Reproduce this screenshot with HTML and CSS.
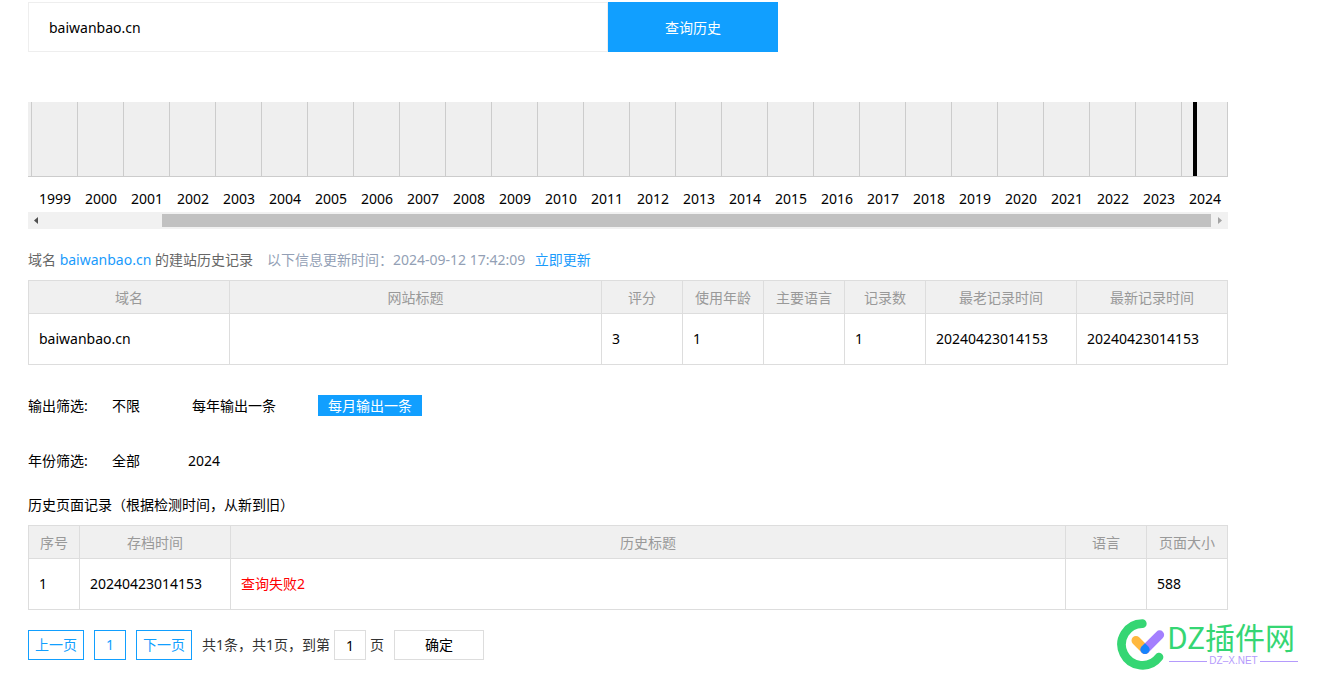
FILE: index.html
```html
<!DOCTYPE html>
<html lang="zh-CN">
<head>
<meta charset="utf-8">
<title>建站历史查询</title>
<link rel="stylesheet" href="styles.css">
</head>
<body>
<main class="page">
  <form class="search">
    <input class="search-input" type="text" value="baiwanbao.cn" aria-label="域名">
    <button class="search-button" type="button">查询历史</button>
  </form>

  <section class="timeline">
    <div class="years">
      <div class="year"></div><div class="year">1999</div><div class="year">2000</div><div class="year">2001</div><div class="year">2002</div><div class="year">2003</div><div class="year">2004</div><div class="year">2005</div><div class="year">2006</div><div class="year">2007</div><div class="year">2008</div><div class="year">2009</div><div class="year">2010</div><div class="year">2011</div><div class="year">2012</div><div class="year">2013</div><div class="year">2014</div><div class="year">2015</div><div class="year">2016</div><div class="year">2017</div><div class="year">2018</div><div class="year">2019</div><div class="year">2020</div><div class="year">2021</div><div class="year">2022</div><div class="year">2023</div><div class="year has-record">2024</div>
    </div>
    <div class="scrollbar">
      <svg class="arrow" viewBox="0 0 17 17"><path d="M10 5v7L6 8.500z" fill="#505050"/></svg>
      <div class="track"><div class="thumb"></div></div>
      <svg class="arrow" viewBox="0 0 17 17"><path d="M7 5v7l4-3.500z" fill="#a3a3a3"/></svg>
    </div>
  </section>

  <p class="info">域名 <a class="link" href="#">baiwanbao.cn</a> 的建站历史记录<span class="updated">以下信息更新时间：2024-09-12 17:42:09 <a class="link refresh" href="#">立即更新</a></span></p>

  <table class="grid">
    <colgroup><col class="w-domain"><col><col class="w-small"><col class="w-small"><col class="w-small"><col class="w-small"><col class="w-time"><col class="w-time"></colgroup>
    <thead><tr><th>域名</th><th>网站标题</th><th>评分</th><th>使用年龄</th><th>主要语言</th><th>记录数</th><th>最老记录时间</th><th>最新记录时间</th></tr></thead>
    <tbody><tr><td>baiwanbao.cn</td><td></td><td>3</td><td>1</td><td></td><td>1</td><td>20240423014153</td><td>20240423014153</td></tr></tbody>
  </table>

  <div class="filter">
    <span class="filter-label">输出筛选:</span>
    <div class="options">
      <a class="option" href="#">不限</a>
      <a class="option" href="#">每年输出一条</a>
      <a class="option active" href="#">每月输出一条</a>
    </div>
  </div>
  <div class="filter">
    <span class="filter-label">年份筛选:</span>
    <div class="options options-year">
      <a class="option" href="#">全部</a>
      <a class="option" href="#">2024</a>
    </div>
  </div>

  <h2 class="heading">历史页面记录（根据检测时间，从新到旧）</h2>
  <table class="grid">
    <colgroup><col class="w-index"><col class="w-time"><col><col class="w-small"><col class="w-small"></colgroup>
    <thead><tr><th>序号</th><th>存档时间</th><th>历史标题</th><th>语言</th><th>页面大小</th></tr></thead>
    <tbody><tr><td>1</td><td>20240423014153</td><td><a class="failed" href="#">查询失败2</a></td><td></td><td>588</td></tr></tbody>
  </table>
</main>

<footer class="footer">
  <nav class="pager">
    <a class="page-link" href="#">上一页</a>
    <a class="page-link page-number" href="#">1</a>
    <a class="page-link" href="#">下一页</a>
    <label class="jump">共1条，共1页，到第<input class="jump-input" type="text" value="1">页</label>
    <button class="confirm" type="button">确定</button>
  </nav>
  <div class="brand">
    <svg class="brand-mark" viewBox="20 26 150 152" fill="none" stroke-linecap="round">
      <path d="M96 39.500A62.500 62.500 0 1 0 146 140" stroke="#35d673" stroke-width="26"/>
      <path d="M77 90l27 27" stroke="#ffb83e" stroke-width="27"/>
      <path d="M148 73l-44 44" stroke="#a37ffe" stroke-width="27"/>
      <path d="M104 98l10 10q8 9 0 18-10 9-20 0-8-9 0-18z" fill="#1684fc"/>
    </svg>
    <div class="brand-text">
      <div class="brand-name">DZ插件网</div>
      <div class="brand-site">DZ–X.NET</div>
    </div>
  </div>
</footer>
</body>
</html>
```
FILE: styles.css
```css
*,
*::before,
*::after {
  box-sizing: border-box;
}

body,
input,
button {
  font-family: "Noto Sans", "Noto Sans CJK SC", sans-serif;
  font-size: 14px;
  line-height: 20px;
  color: #000;
}

body {
  margin: 0;
  background: #fff;
}

a {
  text-decoration: none;
}

.page {
  max-width: 1256px;
  padding: 2px 28px 0;
}

.search {
  display: flex;
  max-width: 750px;
  height: 50px;
}

.search-input {
  flex: 1;
  min-width: 0;
  padding: 2px 20px 0;
  border: 1px solid #eee;
  outline: none;
}

.search-button {
  width: 170px;
  padding: 2px 0 0;
  border: 0;
  background: #119fff;
  color: #fff;
}

.timeline {
  margin-top: 50px;
}

.years {
  display: flex;
  justify-content: flex-end;
  overflow: hidden;
}

.year {
  flex: 0 0 46px;
  height: 110px;
  text-align: center;
}

.year::before {
  content: "";
  display: block;
  height: 75px;
  margin-bottom: 12px;
  border: solid #ccc;
  border-width: 0 1px 1px 0;
  background: #efefef;
}

.has-record::before {
  background: linear-gradient(#000, #000) 11px 0 / 4px 100% no-repeat #efefef;
}

.scrollbar {
  display: flex;
  align-items: center;
  height: 17px;
  background: #f1f1f1;
}

.arrow {
  flex: none;
  width: 17px;
  height: 17px;
}

.track {
  flex: 1;
  display: flex;
  justify-content: flex-end;
}

.thumb {
  width: 90%;
  height: 13px;
  background: #c1c1c1;
}

.info {
  margin: 21px 0 10px;
  color: #666;
}

.link {
  color: #1a9bfc;
}

.updated {
  margin-left: 14px;
  color: #939fb5;
}

.refresh {
  margin-left: 6px;
}

.grid {
  width: 100%;
  table-layout: fixed;
  border-collapse: collapse;
}

.grid th,
.grid td {
  border: 1px solid #ddd;
  padding: 0 10px;
}

.grid th {
  height: 33px;
  padding: 2px 0 0;
  background: #f0f0f0;
  color: #999;
  font-weight: 400;
}

.grid td {
  height: 51px;
}

.grid .w-domain {
  width: 201px;
}

.grid .w-small {
  width: 81px;
}

.grid .w-time {
  width: 151px;
}

.grid .w-index {
  width: 51px;
}

.failed {
  color: #f00;
}

.filter {
  display: flex;
  align-items: center;
  height: 21px;
  margin-top: 34px;
}

.grid + .filter {
  margin-top: 30px;
}

.filter-label {
  width: 74px;
}

.options {
  display: flex;
  gap: 32px;
}

.options-year {
  gap: 28px;
}

.option {
  padding: 0 10px;
  line-height: 21px;
  color: #000;
}

.active {
  background: #119fff;
  color: #fff;
}

.heading {
  margin: 24px 0 10px;
  font-size: 14px;
  font-weight: 400;
}

.footer {
  display: flex;
  align-items: center;
  justify-content: space-between;
  margin-top: 9px;
  padding: 0 19px 0 28px;
}

.pager {
  display: flex;
  align-items: center;
  gap: 10px;
  color: #333;
}

.page-link {
  width: 56px;
  border: 1px solid #119fff;
  line-height: 28px;
  text-align: center;
  color: #119fff;
}

.page-number {
  width: 32px;
}

.jump {
  display: flex;
  align-items: center;
  gap: 4px;
}

.jump-input {
  width: 32px;
  height: 30px;
  padding: 2px 0 0;
  border: 1px solid #ddd;
  text-align: center;
}

.confirm {
  width: 90px;
  height: 30px;
  padding: 0;
  border: 1px solid #ddd;
  background: #fff;
}

.brand {
  display: flex;
}

.brand-mark {
  width: 50px;
  height: 51px;
}

.brand-text {
  width: 131px;
}

.brand-name {
  font-family: "Noto Sans CJK SC", sans-serif;
  font-size: 30px;
  line-height: 34px;
  color: #35d673;
  white-space: nowrap;
}

.brand-site {
  display: flex;
  align-items: center;
  gap: 2px;
  padding-left: 2px;
  font-family: "Liberation Sans", sans-serif;
  font-size: 10px;
  line-height: 16px;
  color: #b49afc;
}

.brand-site::before,
.brand-site::after {
  content: "";
  flex: 1;
  height: 1px;
  background: #b49afc;
}
```
